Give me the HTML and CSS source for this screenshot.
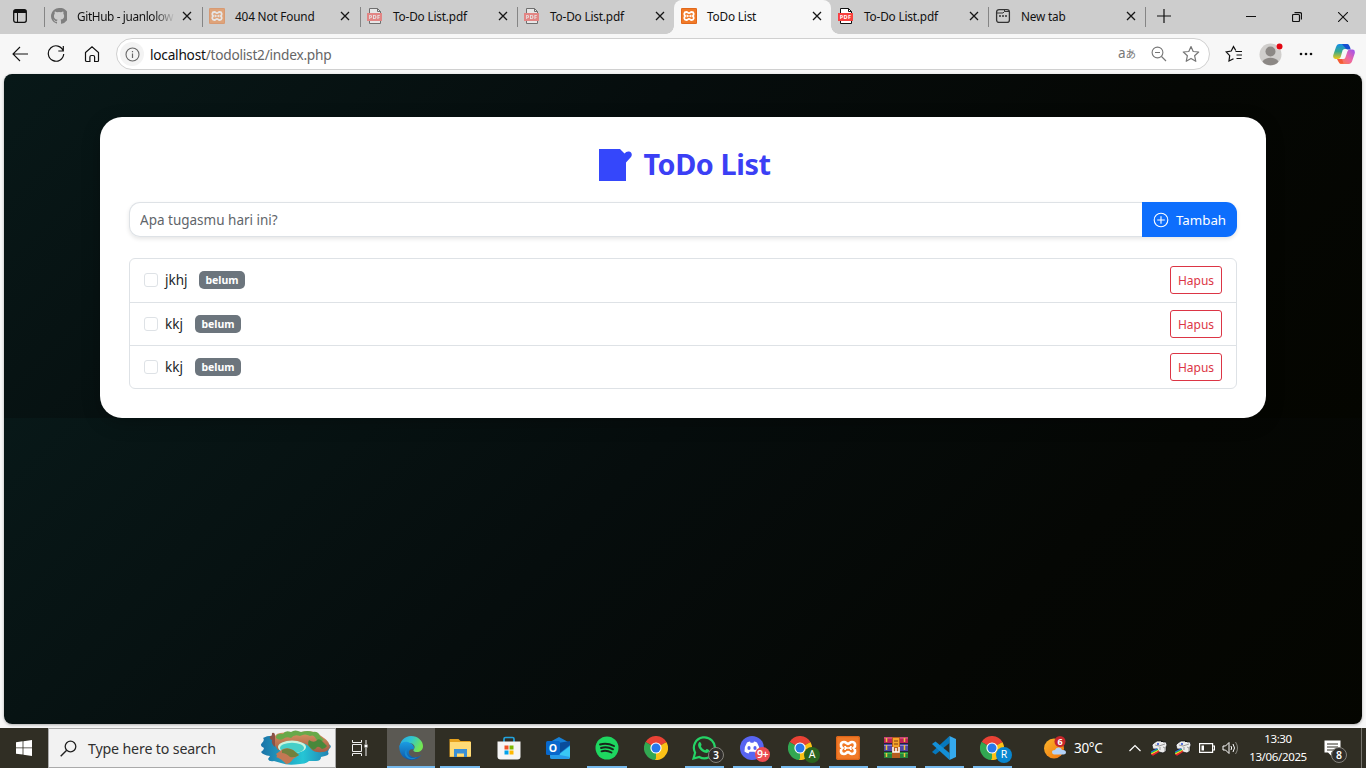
FILE: index.html
```html
<!DOCTYPE html>
<html lang="id">
<head>
<meta charset="utf-8">
<title>ToDo List</title>
<link rel="stylesheet" href="styles.css">
</head>
<body>
<svg class="defs" width="0" height="0">
  <defs>
    <linearGradient id="edgeA" x1="0" y1="0" x2="1" y2="0.4"><stop offset="0" stop-color="#2aa5e8"/><stop offset=".5" stop-color="#30c6cf"/><stop offset="1" stop-color="#72e653"/></linearGradient>
    <linearGradient id="edgeB" x1="0" y1="0" x2="0" y2="1"><stop offset="0" stop-color="#1b9de2"/><stop offset="1" stop-color="#0f57a8"/></linearGradient>
    <linearGradient id="copA" x1="0" y1="0" x2="0" y2="1"><stop offset="0" stop-color="#148ee9"/><stop offset=".5" stop-color="#36a98d"/><stop offset="1" stop-color="#f4c814"/></linearGradient>
    <linearGradient id="copB" x1="1" y1="0" x2="0" y2="1"><stop offset="0" stop-color="#9951f3"/><stop offset=".5" stop-color="#ed66a4"/><stop offset="1" stop-color="#ff8038"/></linearGradient>
    <linearGradient id="sun" x1="0" y1="0" x2="1" y2="1"><stop offset="0" stop-color="#fbb62b"/><stop offset="1" stop-color="#ef720f"/></linearGradient>
    <linearGradient id="sea" x1="0" y1="0" x2="1" y2="0"><stop offset="0" stop-color="#1b73a8"/><stop offset=".6" stop-color="#25c5d5"/><stop offset="1" stop-color="#217db0"/></linearGradient>
    <linearGradient id="land" x1="0" y1="0" x2="0" y2="1"><stop offset="0" stop-color="#d99562"/><stop offset="1" stop-color="#a45d45"/></linearGradient>
    <symbol id="close" viewBox="0 0 10 10"><path d="M1 1l8 8M9 1L1 9" fill="none" stroke="#151515" stroke-width="1.3"/></symbol>
    <symbol id="pdf" viewBox="0 0 16 16"><path d="M2.500 15.500V.5h8l3 3v12z" fill="#fff" stroke="#111"/><path d="M10.500 .5v3h3" fill="none" stroke="#111"/><rect x="0" y="5" width="15" height="8" fill="#f8403e"/><text x="1.700" y="11.200" font-size="5.600" font-weight="700" font-family="Open Sans" fill="#fff" textLength="11.500">PDF</text></symbol>
    <symbol id="xampp" viewBox="0 0 24 24"><rect width="24" height="24" rx="2" fill="#f17a28"/><rect x=".7" y=".7" width="22.600" height="22.600" rx="1.500" fill="none" stroke="#d85f16"/><path d="M8 6C4.200 6 4.200 10.500 6.300 12 4.200 13.500 4.200 18 8 18c2.300 0 2.300-1.800 4-1.800s1.700 1.800 4 1.800c3.800 0 3.800-4.500 1.700-6C19.800 10.500 19.800 6 16 6c-2.300 0-2.300 1.800-4 1.800S10.300 6 8 6z" fill="none" stroke="#fff" stroke-width="2.700"/><path d="M9 10q0 2 2 2h2q2 0 2-2M9 14q0-2 2-2h2q2 0 2 2" fill="none" stroke="#fff" stroke-width="1.700"/></symbol>
    <symbol id="chrome" viewBox="0 0 24 24"><path d="M12 12L1.600 6A12 12 0 0 1 22.400 6z" fill="#e94235"/><path d="M12 12L22.400 6A12 12 0 0 1 12 24z" fill="#fbc116"/><path d="M12 12L12 24A12 12 0 0 1 1.600 6z" fill="#32a852"/><path d="M12 6.500h10.700l-.3-.5z" fill="#e94235"/><path d="M7.300 14.800L1.600 6 1 8z" fill="#32a852"/><path d="M16.800 14.800L11 24h3z" fill="#fbc116"/><circle cx="12" cy="12" r="5.600" fill="#fff"/><circle cx="12" cy="12" r="4.500" fill="#2878eb"/></symbol>
    <symbol id="gun" viewBox="0 0 16 16"><path d="M1 5l2-2 3-2h5l1 1h3l1 3-1 2v4l-3 2-4-1-2-3H2z" fill="#ececec" stroke="#111" stroke-width=".7"/><path d="M4 5l4 1 6-2M9 7v3M12 7l2 1v3" fill="none" stroke="#999"/><path d="M10 1h2v1h-2z" fill="#111"/><circle cx="7" cy="4" r="1" fill="#294ad5"/><path d="M0 11.500L6.500 8v1.500L0 13z" fill="#265bf5"/><path d="M0 12.500l7-3.800v1.500L0 14z" fill="#25bc50"/><path d="M0 13.500l7.500-3.800v1.300L1 14.700z" fill="#ffef29"/><path d="M0 14.500l8-4v1.500L2 15.800z" fill="#ed2730"/></symbol>
  </defs>
</svg>

<header class="tabstrip">
  <div class="tab-actions"><svg width="14" height="14" viewBox="0 0 14 14"><rect x=".7" y=".7" width="12.600" height="12.600" rx="2" fill="none" stroke="#111" stroke-width="1.300"/><path d="M1 1h12v3H1z" fill="#111"/><path d="M4.500 4v9" stroke="#111"/></svg></div>
  <div class="tab roomy line"><svg class="fav dim" viewBox="0 0 16 16"><path fill="#333" d="M8 0a8 8 0 0 0-2.530 15.590c.4.070.550-.17.550-.38v-1.490c-2.010.37-2.690-.5-2.840-.9-.3-.8-.8-1-.8-1.100-.4-.3.900-.3 1.200.5.7 1.100 1.700.9 2.500.6.070-.5.280-.87.500-1.070-1.780-.2-3.640-.89-3.640-3.950 0-.87.310-1.590.820-2.150-.08-.2-.36-1.020.080-2.120 0 0 .67-.21 2.200.82a7.400 7.400 0 0 1 4 0c1.530-1.040 2.200-.82 2.200-.82.440 1.100.160 1.920.080 2.120.510.560.820 1.270.820 2.150 0 3.070-1.870 3.750-3.650 3.950.290.250.540.730.540 1.480v2.200c0 .210.150.460.550.380A8 8 0 0 0 8 0z"/></svg><span class="tab-title fade">GitHub - juanlolow</span><svg class="x"><use href="#close"/></svg></div>
  <div class="tab roomy line"><svg class="fav dim"><use href="#xampp"/></svg><span class="tab-title">404 Not Found</span><svg class="x"><use href="#close"/></svg></div>
  <div class="tab line"><svg class="fav dim"><use href="#pdf"/></svg><span class="tab-title">To-Do List.pdf</span><svg class="x"><use href="#close"/></svg></div>
  <div class="tab line"><svg class="fav dim"><use href="#pdf"/></svg><span class="tab-title">To-Do List.pdf</span><svg class="x"><use href="#close"/></svg></div>
  <div class="tab active"><svg class="fav"><use href="#xampp"/></svg><span class="tab-title">ToDo List</span><svg class="x"><use href="#close"/></svg></div>
  <div class="tab"><svg class="fav"><use href="#pdf"/></svg><span class="tab-title">To-Do List.pdf</span><svg class="x"><use href="#close"/></svg></div>
  <div class="tab line"><svg class="fav" viewBox="0 0 16 16"><rect x="1.600" y="1.600" width="12.800" height="12.800" rx="2.500" fill="none" stroke="#333" stroke-width="1.300"/><path d="M2 5h6l1.500-1.500V2M9.500 3.500h4.500" fill="none" stroke="#333"/><path d="M4 8h2M7 8h2M10 8h2" stroke="#333" stroke-width="1.500"/></svg><span class="tab-title">New tab</span><svg class="x"><use href="#close"/></svg></div>
  <div class="new-tab line"><svg width="14" height="14" viewBox="0 0 14 14"><path d="M7 0v14M0 7h14" stroke="#111" stroke-width="1.200"/></svg></div>
  <div class="window-buttons">
    <svg width="10" height="10" viewBox="0 0 10 10"><path d="M0 4.500h10" stroke="#111"/></svg>
    <svg width="10" height="10" viewBox="0 0 10 10"><rect x=".5" y="2.500" width="7" height="7" rx="1" fill="none" stroke="#111" stroke-width="1.200"/><path d="M2.500 .6H8Q9.500 .6 9.500 2v5.500" fill="none" stroke="#111" stroke-width="1.200"/></svg>
    <svg width="10" height="10" viewBox="0 0 10 10"><path d="M0 0l10 10M10 0L0 10" stroke="#111" stroke-width="1.100"/></svg>
  </div>
</header>

<nav class="toolbar">
  <div class="nav-buttons">
    <svg width="18" height="18" viewBox="0 0 18 18"><path d="M17 9H2M9 2L2 9l7 7" fill="none" stroke="#111" stroke-width="1.100"/></svg>
    <svg width="18" height="18" viewBox="0 0 18 18"><path d="M16.300 6A7.700 7.700 0 1 0 16.700 9M16.300 1v5h-5" fill="none" stroke="#111" stroke-width="1.200"/></svg>
    <svg width="18" height="18" viewBox="0 0 18 18"><path d="M2.500 7.500L9 1.800l6.500 5.700v8.100q0 .9-.9.900h-3V12q0-1.500-1.500-1.500H8.400q-1.500 0-1.500 1.500v4.500h-3q-1.400 0-1.400-1z" fill="none" stroke="#111" stroke-width="1.200"/></svg>
  </div>
  <div class="address">
    <span class="info"><svg width="15" height="15" viewBox="0 0 15 15"><circle cx="7.500" cy="7.500" r="6.500" fill="none" stroke="#666" stroke-width="1.100"/><path d="M7.500 6.500V11M7.500 4v1.200" stroke="#666" stroke-width="1.200"/></svg></span>
    <span class="url"><b>localhost</b>/todolist2/index.php</span>
    <span class="translate">a<small>あ</small></span>
    <svg class="magnify" width="16" height="16" viewBox="0 0 16 16"><circle cx="6.500" cy="6.500" r="5.400" fill="none" stroke="#777" stroke-width="1.100"/><path d="M4 6.500h5M10.500 10.500L15 15" stroke="#777" stroke-width="1.200"/></svg>
    <svg width="18" height="18" viewBox="0 0 18 18"><path d="M9 1.500l2.200 5 5.500.5-4.100 3.700 1.200 5.600L9 13.400l-4.800 2.900 1.200-5.600L1.300 7l5.500-.5z" fill="none" stroke="#777" stroke-width="1.200" stroke-linejoin="round"/></svg>
  </div>
  <div class="right-tools">
    <svg width="18" height="18" viewBox="0 0 18 18"><path d="M10.800 5.500L8.500 1.600 6.200 6 1.200 7l3.500 3.700L4 16l4.500-2.300M10.500 6.500h6.500M11.500 10h5.500M11.500 13.500h5" fill="none" stroke="#111" stroke-width="1.200"/></svg>
    <svg class="avatar" width="24" height="24" viewBox="0 0 24 24"><circle cx="11.500" cy="12.500" r="11" fill="#d0cecc"/><circle cx="11.500" cy="9.500" r="5" fill="#8c8885"/><path d="M3.500 19.500c3-5 13-5 16 0-3 5-13 5-16 0z" fill="#8c8885"/><circle cx="20.500" cy="4.500" r="3.400" fill="#f7f7f7"/><circle cx="20.500" cy="4.500" r="3" fill="#e20612"/></svg>
    <svg width="16" height="16" viewBox="0 0 16 16" fill="#111"><circle cx="3" cy="8" r="1.300"/><circle cx="8" cy="8" r="1.300"/><circle cx="13" cy="8" r="1.300"/></svg>
    <svg class="copilot" width="22" height="22" viewBox="0 0 22 22"><path d="M6 1h8q2 0 1.400 2l-.8 3h-3Q10 6 9.500 7.500L7.700 14Q7 16 5 16H2.500Q-.5 16 .3 12L3 4q.8-3 3-3z" fill="url(#copA)"/><path d="M9 1h5q2 0 3 3l.7 2.500h-3q-2 0-2.700-2z" fill="#174fd1"/><path d="M17 6.500h2.500q3 0 2.200 4L19.500 17q-1 4-4 4H8q-2 0-1.500-2l.8-3h3q1.600 0 2.100-1.500l2-6q.6-2 2.600-2z" fill="url(#copB)"/><path d="M4 16h5l1.500 4.500H8q-2 0-2.700-2z" fill="#f35b37"/></svg>
  </div>
</nav>

<main class="viewport">
  <section class="todo-card">
    <h1 class="title"><svg width="34" height="34" viewBox="0 0 34 34"><path d="M0 1h21l4.500 4.500C27 4 28 3.200 30 3.500c3 .7 3.500 3.500 2 5.500L27 14.500V33H0z"/></svg><span>ToDo List</span></h1>
    <form class="task-form"><input class="task-input" placeholder="Apa tugasmu hari ini?"><button class="add" type="button"><svg width="16" height="16" viewBox="0 0 16 16"><circle cx="8" cy="8" r="6.800" fill="none" stroke="#fff" stroke-width="1.100"/><path d="M8 4.200v7.600M4.200 8h7.600" stroke="#fff" stroke-width="1.100"/></svg><span>Tambah</span></button></form>
    <ul class="tasks">
      <li><i class="check"></i><span class="name">jkhj</span><span class="badge">belum</span><button class="delete">Hapus</button></li>
      <li><i class="check"></i><span class="name short">kkj</span><span class="badge">belum</span><button class="delete">Hapus</button></li>
      <li><i class="check"></i><span class="name short">kkj</span><span class="badge">belum</span><button class="delete">Hapus</button></li>
    </ul>
  </section>
</main>

<footer class="taskbar">
  <div class="start"><svg width="16" height="16" viewBox="0 0 16 16" fill="#fff"><path d="M0 2.200l6.600-.9v6.200H0zM7.400 1.200L16 0v7.500H7.400zM0 8.300h6.600v6.300L0 13.700zM7.400 8.300H16V16l-8.600-1.200z"/></svg></div>
  <div class="search"><svg width="17" height="17" viewBox="0 0 17 17"><circle cx="10.500" cy="6.500" r="5.300" fill="none" stroke="#222" stroke-width="1.300"/><path d="M6.700 10.300L.7 16.300" stroke="#222" stroke-width="1.400"/></svg><span>Type here to search</span>
    <svg class="island" width="72" height="36" viewBox="0 0 72 36"><path d="M3 8q5-3 12-2l40-1q5 3 8 6l7 4q2 2-1 4l-1 3q2 3-3 4l-4 1q0 4-5 4h-7q-3 3-9 3-12 2-19-1l-7-2q-5 1-6-2l2-3q-7-1-9-4 3-2 3-4-5-2-2-5 3-3 1-5z" fill="url(#sea)"/><path d="M14 10q0-6 6-7l9-1h12q10-2 16 1l7 5q5 3 6 9-2 5-8 5-7 1-11-3-3-5-9-6l-8-1q-8 0-11 7l-5 1q-4-5-4-10z" fill="url(#land)"/><path d="M16 8q0-5 7-4 2-4 8-2 4-3 10 0 7-2 12 0 5-1 7 4l4 4q-5 3-8-1-2-5-6-3-5-3-10 0-6-2-9 2-5-2-8 1-3 2-7-1z" fill="#68a94a"/><path d="M49 10q4 3 7 1 2-3 5-1l6 6q-2 3-5 3-3-3-5-2-3 4-5 2-6-4-3-9z" fill="#49883b"/><path d="M12 3q3-1 3 3v11q-4-3-3-7-3-1-2-4 2 1 2-3z" fill="#8c5145"/><ellipse cx="32" cy="17" rx="14" ry="6.500" fill="#c9f4de"/><ellipse cx="32" cy="18" rx="12" ry="5.300" fill="#46cfc8"/><path d="M16 24q4-3 7-5 5-2 10 1l6 5-6 4q-3 5-7 5-4-5-10-7 2-1 0-3z" fill="#c37854"/><path d="M22 20q5-3 11 0l6 5q-4 3-9 2-4-4-8-4z" fill="#71813d"/></svg>
  </div>
  <div class="task-view"><svg width="18" height="16" viewBox="0 0 18 16" fill="none" stroke="#eee"><path d="M1.500 0v2.500h9V0M1.500 16v-2.500h9V16M1.500 4.500h9v7h-9zM15 0v4M15 8v8"/><path d="M13.500 4.500h3v3h-3z" fill="#fff" stroke="none"/></svg></div>
  <div class="apps">
    <div class="app current open gap"><svg viewBox="0 0 24 24"><path d="M1 13C0 5 6 0 12 0c7 0 12 5 12 10 0 4-3 6-6 6-4 0-4-2-3-3 2-3-1-6-5-6-5 0-8 3-9 6z" fill="url(#edgeA)"/><path d="M.2 10C2 5 8 5 11 7c3 1 5 4 3.500 6.500-5-2-7 5-1 7.500 3 1 6 0 9-2C17 27 0 26 .2 10z" fill="url(#edgeB)"/><path d="M8 13c-2 7 4 11 10 8-6 6-17-2-10-8z" fill="#1688cf"/></svg></div>
    <div class="app open wide gap"><svg viewBox="0 0 24 24"><path d="M1.500 3h9l2 2h10v16h-21z" fill="#e6a21e"/><path d="M2 6h21v14.500H2z" fill="#ffdb76"/><path d="M6 13h13v8h-3v-3.500H9V21H6z" fill="#3b90d6"/></svg></div>
    <div class="app gap"><svg viewBox="0 0 24 24"><path d="M7 6V3q0-1.500 1.500-1.500h7Q17 1.500 17 3v3" fill="none" stroke="#22a3dd" stroke-width="1.700"/><path d="M.5 5.500h23v15q0 3-3 3h-17q-3 0-3-3z" fill="#f5f5f5"/><path d="M7.500 9.500h4v4h-4z" fill="#ef5125"/><path d="M12.500 9.500h4v4h-4z" fill="#7db800"/><path d="M7.500 14.500h4v4h-4z" fill="#00a2ec"/><path d="M12.500 14.500h4v4h-4z" fill="#ffb900"/></svg></div>
    <div class="app gap"><svg viewBox="0 0 24 24"><path d="M4 6l9-5 11 6v14q0 2-2 2H6q-2 0-2-2z" fill="#1680d8"/><path d="M12 7l12-2v4l-14 11z" fill="#094c9b"/><path d="M24 10v11q0 2-2 2H7z" fill="#39c7f4"/><path d="M4 17l20 4q-1 2-2 2H6q-2 0-2-2z" fill="#289be8"/><rect y="5" width="14" height="14" rx="1.500" fill="#0868cc"/><text x="7" y="15.700" text-anchor="middle" font-family="Open Sans" font-size="10.500" font-weight="700" fill="#fff">O</text></svg></div>
    <div class="app open wide gap"><svg viewBox="0 0 24 24"><circle cx="12" cy="12" r="11.500" fill="#1ed760"/><path d="M5 8.500q7-2 14 1.500M6 12q6-2 12 1.300M6.500 15.300q5-1.500 10 1.200" fill="none" stroke="#18251b" stroke-width="1.900" stroke-linecap="round"/></svg></div>
    <div class="app"><svg><use href="#chrome"/></svg></div>
    <div class="app open"><svg viewBox="0 0 24 24"><path d="M1.500 22.500l1.600-5.800A10.500 10.500 0 1 1 7.300 21z" fill="none" stroke="#25d366" stroke-width="2.200"/><path d="M7 6.500c1-1 2 0 2.500 2 .3 1-1 1.500-.5 2 1 2 2 3 4 3.700.7.300 1-1.500 2-1.200 2 .7 2.500 1.200 2 2.300-1 2.500-4 2-7 0C6.500 12.500 5 9 7 6.500z" fill="#25d366"/></svg><b class="count dark">3</b></div>
    <div class="app open"><svg viewBox="0 0 24 24"><circle cx="12" cy="12" r="12" fill="#5865f2"/><path d="M7 6.500q2-.8 3-.9l.6 1.100h2.800l.6-1.100q1 .1 3 .9 3 4.500 2.500 9-2 1.700-4 2l-1-1.700h-5l-1 1.700q-2-.3-4-2Q4 11 7 6.500z" fill="#fff"/><ellipse cx="9" cy="12" rx="1.600" ry="1.900" fill="#5865f2"/><ellipse cx="15" cy="12" rx="1.600" ry="1.900" fill="#5865f2"/></svg><b class="count red">9+</b></div>
    <div class="app open"><svg><use href="#chrome"/></svg><b class="count green">A</b></div>
    <div class="app open"><svg><use href="#xampp"/></svg></div>
    <div class="app open"><svg viewBox="0 0 24 24"><path d="M0 1h24v6H0z" fill="#bd2258"/><path d="M0 8h24v7H0z" fill="#5046a5"/><path d="M0 16h24v6H0z" fill="#27843c"/><path d="M0 2h24" stroke="#dd6b91"/><path d="M0 9.500h24" stroke="#8e83cf"/><path d="M0 17.500h24" stroke="#38b94b"/><path d="M0 7.500h24M0 15.500h24" stroke="#242638"/><path d="M2.500 2v4M2.500 9v5M2.500 17v4M20.500 2v4M20.500 9v5M20.500 17v4" stroke="#edc53d" stroke-width="1.500"/><path d="M8 1h8v21H8z" fill="#b65d20"/><path d="M9 2h6v9H9z" fill="#f5a52a"/><path d="M9 11v5h6v-5M12 12v4" fill="none" stroke="#fff" stroke-width="1.500"/><path d="M10 5h4M10 8h4" stroke="#813b13"/></svg></div>
    <div class="app open"><svg viewBox="0 0 24 24"><path d="M17.500 0v7L3.500 18.500 0 16z" fill="#0678bd"/><path d="M17.500 24v-7L3.500 5.500 0 8z" fill="#148fd6"/><path d="M17.500 0L24 3v18l-6.500 3z" fill="#35a9ed"/></svg></div>
    <div class="app open"><svg><use href="#chrome"/></svg><b class="count blue">R</b></div>
  </div>
  <div class="tray">
    <div class="weather"><svg width="24" height="24" viewBox="0 0 24 24"><circle cx="10" cy="12.500" r="10" fill="url(#sun)"/><path d="M10 18.500q-2-.5-2-2.500t3-2q1-3 4-2.500 2.500.3 3 2.500 4-.5 4 2.500 0 2-2.500 2z" fill="#b4d2f8"/><circle cx="16" cy="5.500" r="5.500" fill="#c8272c"/><text x="16" y="8.700" text-anchor="middle" font-family="Open Sans" font-size="9" font-weight="700" fill="#fff">6</text></svg><span>30°C</span></div>
    <svg class="chevron" width="12" height="8" viewBox="0 0 12 8"><path d="M.5 7L6 1.500 11.500 7" fill="none" stroke="#fff" stroke-width="1.200"/></svg>
    <svg class="gun" width="16" height="16"><use href="#gun"/></svg>
    <svg class="gun" width="16" height="16"><use href="#gun"/></svg>
    <svg class="battery" width="16" height="10" viewBox="0 0 16 10"><path d="M.6.600h13v8.800h-13zM14 3h1.500v4H14" fill="none" stroke="#fff" stroke-width="1.200"/><path d="M2.500 2.500h2.500v5H2.500z" fill="#fff"/></svg>
    <svg class="sound" width="17" height="14" viewBox="0 0 17 14" fill="none" stroke="#fff"><path d="M1 5h2.500L7 1.500v11L3.500 9H1zM9 5q1.300 2 0 4"/><path d="M11 3q3 4 0 8"/><path d="M13.500 1q4 6 0 12" stroke="#8a8982"/></svg>
    <div class="clock"><span>13:30</span><span class="date">13/06/2025</span></div>
    <div class="notice"><svg width="17" height="16" viewBox="0 0 17 16"><path d="M.5.500h16v12H7v3l-3-3H.5z" fill="#fff"/><path d="M3 4h11M3 7h11M3 10h7" stroke="#302e24"/></svg><b class="count dark">8</b></div>
  </div>
</footer>
</body>
</html>
```
FILE: styles.css
```css
* { box-sizing: border-box; }
body { margin: 0; width: 1366px; height: 768px; overflow: hidden; display: flex; flex-direction: column; background: #f7f7f7; font-family: "Noto Sans", "Noto Sans CJK JP", sans-serif; }
svg { flex: none; display: block; }
.defs { position: absolute; }

.tabstrip { display: flex; height: 34px; background: #cdcdcd; flex: none; }
.tab-actions { width: 44px; padding: 9px 0 0 13px; flex: none; }
.tab { width: 157px; flex: none; height: 34px; padding: 0 0 2px 7px; display: flex; align-items: center; position: relative; font-size: 11.8px; color: #111; }
.tab.roomy { width: 158px; }
.line::before { content: ""; position: absolute; left: 0; top: 7px; width: 1px; height: 20px; background: #858585; }
.tab.active { background: #f7f7f7; border-radius: 8px 8px 0 0; z-index: 1; }
.tab.active::before, .tab.active::after { content: ""; position: absolute; bottom: 0; width: 8px; height: 8px; }
.tab.active::before { left: -8px; background: radial-gradient(circle at 0 0, #cdcdcd 7.5px, #f7f7f7 8px); }
.tab.active::after { right: -8px; background: radial-gradient(circle at 100% 0, #cdcdcd 7.5px, #f7f7f7 8px); }
.fav { width: 16px; height: 16px; margin-right: 10px; }
.dim { opacity: .5; }
.tab-title { width: 98px; white-space: nowrap; letter-spacing: -.18px; }
.tab-title.fade { letter-spacing: -.36px; -webkit-mask-image: linear-gradient(90deg, #000 78%, transparent); mask-image: linear-gradient(90deg, #000 78%, transparent); }
.x { width: 10px; height: 10px; margin-left: 7px; }
.new-tab { width: 40px; position: relative; padding: 9px 0 0 12px; }
.window-buttons { margin-left: auto; display: flex; gap: 36px; padding: 12px 18px 0 0; }

.toolbar { display: flex; align-items: center; height: 40px; flex: none; }
.nav-buttons { display: flex; gap: 18px; width: 116px; padding-left: 11px; flex: none; }
.address { width: 1094px; flex: none; height: 32px; border: 1px solid #d0d0d0; border-radius: 16px; background: #fff; display: flex; align-items: center; padding: 0 9px 0 3px; }
.info { width: 24px; height: 24px; border-radius: 50%; background: #f3f3f3; display: grid; place-items: center; }
.url { margin-left: 6px; font-size: 13.700px; color: #666; letter-spacing: -.24px; }
.url b { font-weight: 400; color: #111; }
.translate { margin-left: auto; color: #777; font-size: 13.500px; white-space: nowrap; line-height: 18px; padding-bottom: 2px; }
.translate small { font-size: 10.500px; }
.magnify { margin: 0 15px 0 15px; }
.right-tools { display: flex; align-items: center; padding-left: 15px; width: 156px; }
.avatar { margin: 0 15px 0 16px; }
.copilot { margin-left: 19px; }

.viewport { margin: 0 4px; height: 650px; flex: none; border-radius: 8px; background: linear-gradient(135deg, #081818 0%, #060d0d 40%, #050704 70%, #040500 100%) 0 0 / 100% 344px; padding: 43px 96px; box-shadow: 0 1px 3px rgba(0,0,0,.3); }
.todo-card { height: 301px; background: #fff; border-radius: 22px; padding: 29px; box-shadow: 0 5px 18px rgba(0,0,0,.25); }
.title { height: 37px; margin: 0 0 19px; padding-left: 4px; display: flex; align-items: center; justify-content: center; gap: 10px; font-size: 28.800px; line-height: 35px; color: #3b3ff5; letter-spacing: -.4px; }
.title svg { fill: #3547fb; }
.title span { padding-bottom: 2px; }
.task-form { height: 35px; display: flex; margin: 0 0 21px; border-radius: 11px; box-shadow: 0 2px 4px rgba(0,0,0,.1); }
.task-input { flex: 1; border: 1px solid #dee2e6; border-right: 0; border-radius: 11px 0 0 11px; padding: 0 10px; font: 13.500px "Noto Sans", sans-serif; background: #fff; }
.task-input::placeholder { color: #5f656b; opacity: 1; }
.add { width: 95px; border: 0; border-radius: 0 11px 11px 0; background: #0d6efd; color: #fff; padding: 0 11px; display: flex; align-items: center; gap: 7px; font: 13.300px "Noto Sans", sans-serif; }
.tasks { list-style: none; margin: 0; padding: 0; height: 131px; border: 1px solid #dee2e6; border-radius: 6px; display: grid; grid-template-rows: 43px 43px 43px; }
.tasks li { display: flex; align-items: center; padding: 0 14px; font-size: 13.500px; color: #212529; }
.tasks li:first-child { padding-bottom: 1px; }
.tasks li + li { border-top: 1px solid #dee2e6; }
.check { width: 14px; height: 14px; border: 1px solid #dee2e6; border-radius: 3px; margin: 0 7px 1px 0; }
.name { width: 23px; white-space: nowrap; }
.name.short { width: 19px; margin-left: 0; }
.badge { height: 18px; width: 46px; line-height: 18px; margin-left: 11px; border-radius: 5px; text-align: center; background: #6c757d; color: #fff; font-size: 10.500px; font-weight: 700; }
.delete { margin-left: auto; width: 52px; height: 28px; padding: 0; border: 1px solid #dc3545; border-radius: 3px; background: #fff; color: #dc3545; font: 12px "Noto Sans", sans-serif; }

.taskbar { height: 40px; margin-top: 4px; background: #302e24; color: #fff; display: flex; flex: none; }
.start { width: 48px; display: grid; place-items: center; flex: none; }
.search { width: 288px; flex: none; background: #f2f2f2; border: 1px solid #aaa; display: flex; align-items: center; padding: 0 3px 0 11px; color: #303030; font-size: 14.200px; letter-spacing: -.15px; }
.search span { margin-left: 11px; white-space: nowrap; }
.island { margin-left: auto; }
.task-view { width: 51px; padding: 12px 0 0 15px; flex: none; }
.apps { display: flex; flex: none; }
.app { width: 48px; height: 40px; display: grid; place-items: center; position: relative; flex: none; }
.app.gap { margin-right: 1px; }
.app > svg { width: 24px; height: 24px; }
.app.open::after { content: ""; position: absolute; left: 5px; right: 4px; bottom: 0; height: 2px; background: #76b9ed; }
.app.wide::after { left: 4px; }
.app.current { background: #5b5953; }
.app.current::after { left: 0; right: 0; }
.count { position: absolute; left: 28px; top: 19px; width: 16px; height: 16px; border-radius: 50%; text-align: center; font-size: 10.500px; line-height: 15px; font-weight: 600; }
.dark { background: #302e2b; border: 1px solid #85837c; line-height: 14px; }
.red { background: #ed4c52; left: 27px; width: 15px; height: 15px; letter-spacing: -.5px; }
.green { background: #2b641e; font-weight: 400; }
.blue { background: #0886d0; font-weight: 400; }
.tray { flex: 1; display: flex; align-items: center; border-right: 1px solid #77756e; margin-right: 4px; }
.weather { display: flex; align-items: center; gap: 6px; width: 113px; padding-left: 28px; font-size: 13.500px; letter-spacing: -.3px; flex: none; }
.chevron { margin-right: 10px; }
.gun { margin-right: 8px; }
.battery { margin-right: 7px; }
.clock { width: 70px; text-align: center; display: flex; flex-direction: column; font-size: 11.500px; line-height: 18px; margin-left: 4px; letter-spacing: -.35px; }
.notice { position: relative; margin-left: 11px; }
.notice .count { left: 7px; top: 7px; }
```
